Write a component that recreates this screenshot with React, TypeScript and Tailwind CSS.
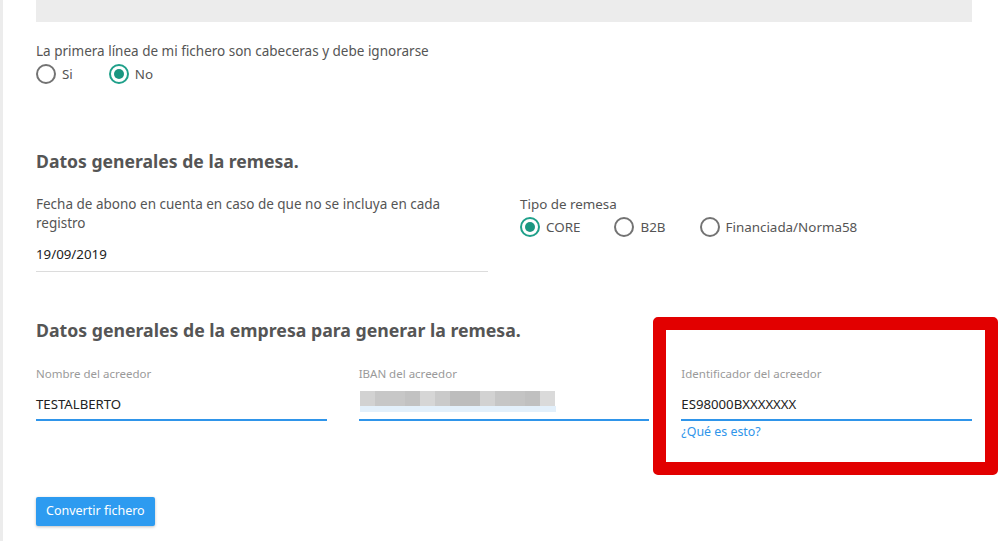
import React from 'react';

const FONT = { fontFamily: '"Noto Sans", "Open Sans", sans-serif' };

function Radio({ label, checked, gap = 'mr-[36px]' }: { label: string; checked?: boolean; gap?: string }) {
  return (
    <label className={`flex items-center gap-[6px] ${gap}`}>
      <span
        className={`w-[20px] h-[20px] rounded-full border-2 flex items-center justify-center ${
          checked ? 'border-[#1fa08a]' : 'border-[#737373]'
        }`}
      >
        {checked && <span className="w-[10px] h-[10px] rounded-full bg-[#1a9680]" />}
      </span>
      <span className="text-[13.4px] leading-5 text-[#555]">{label}</span>
    </label>
  );
}

function Field({ label, value, children }: { label: string; value?: string; children?: React.ReactNode }) {
  return (
    <div className="flex-1">
      <div className="mt-[24px] text-[11.5px] leading-4 text-[#9a9a9a]">{label}</div>
      <div className="mt-[12px] h-5 text-[13.2px] leading-5 text-[#222]">{value}{children}</div>
      <div className="mt-[5px] h-[2px] bg-[#2f95ea]" />
    </div>
  );
}

function Blurred() {
  const blocks = ['#d2d2d2', '#c7c7c7', '#c7c7c7', '#c2c2c2', '#d6d6d6', '#cacaca', '#bdbdbd', '#bdbdbd', '#d2d2d2', '#c6c6c6', '#c4c4c4', '#c0c0c0', '#dadada'];
  return (
    <div className="relative -top-[3px]">
      <div className="flex h-[15px] ml-[1px]">
        {blocks.map((c, i) => (
          <div key={i} className="w-[15px] h-full" style={{ background: c }} />
        ))}
      </div>
      <div className="h-[6px] w-[196px] ml-[1px] bg-[#e3f0fb]" />
    </div>
  );
}

export default function App() {
  return (
    <div className="relative w-[1000px] h-[541px] bg-white overflow-hidden" style={FONT}>
      <div className="absolute left-0 top-0 bottom-0 w-[3px] bg-[#ececec]" />
      <div className="pl-[36px] w-[972px]">
        <div className="h-[22px] bg-[#ececec]" />

        <div className="mt-[19px] text-[13.5px] leading-5 text-[#555]">
          La primera línea de mi fichero son cabeceras y debe ignorarse
        </div>
        <div className="mt-[3px] flex">
          <Radio label="Si" />
          <Radio label="No" checked gap="" />
        </div>

        <h2 className="mt-[65px] text-[17.6px] leading-6 font-bold text-[#555]">Datos generales de la remesa.</h2>

        <div className="flex gap-[32px]">
          <div className="w-[452px]">
            <div className="mt-[22px] text-[13.5px] leading-[19px] text-[#555] pr-[30px]">
              Fecha de abono en cuenta en caso de que no se incluya en cada registro
            </div>
            <div className="mt-[11px] text-[13.3px] leading-5 text-[#222]">19/09/2019</div>
            <div className="mt-[7px] h-px bg-[#dcdcdc]" />
          </div>
          <div>
            <div className="mt-[22px] text-[13.4px] leading-[19px] text-[#555]">Tipo de remesa</div>
            <div className="mt-[3px] flex">
              <Radio label="CORE" checked gap="mr-[34px]" />
              <Radio label="B2B" gap="mr-[34px]" />
              <Radio label="Financiada/Norma58" gap="" />
            </div>
          </div>
        </div>

        <h2 className="mt-[46px] text-[17.7px] leading-6 font-bold text-[#555]">
          Datos generales de la empresa para generar la remesa.
        </h2>

        <div className="flex gap-[32px]">
          <Field label="Nombre del acreedor" value="TESTALBERTO" />
          <Field label="IBAN del acreedor">
            <Blurred />
          </Field>
          <div className="flex-1">
            <Field label="Identificador del acreedor" value="ES98000BXXXXXXX" />
            <a className="block mt-[3px] text-[12.4px] leading-4 text-[#2f95ea]">¿Qué es esto?</a>
          </div>
        </div>

        <button className="mt-[57px] h-[29px] px-[10px] rounded-[2px] bg-[#2d9bf0] text-white text-[12.5px] shadow-[0_1px_3px_rgba(0,0,0,0.25)]">
          Convertir fichero
        </button>
      </div>

      <div className="absolute left-[653px] top-[317px] w-[345px] h-[158px] border-[13px] border-[#e20000] rounded-[5px]" />
    </div>
  );
}
